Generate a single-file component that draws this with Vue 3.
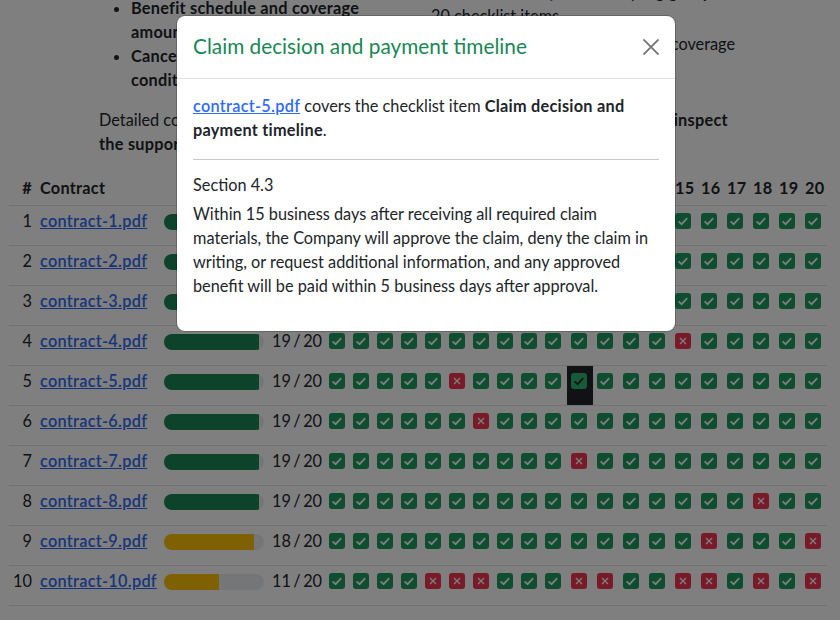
<script setup>
const heads = Array.from({ length: 20 }, (_, i) => i + 1)
const rows = [
  { n: 1, score: 20, miss: [] },
  { n: 2, score: 20, miss: [] },
  { n: 3, score: 20, miss: [] },
  { n: 4, score: 19, miss: [15] },
  { n: 5, score: 19, miss: [6] },
  { n: 6, score: 19, miss: [7] },
  { n: 7, score: 19, miss: [11] },
  { n: 8, score: 19, miss: [18] },
  { n: 9, score: 18, miss: [16, 20] },
  { n: 10, score: 11, miss: [5, 6, 7, 11, 12, 15, 16, 18, 20] }
]
</script>

<template>
  <div class="page">
    <div class="intro">
      <div class="cols">
        <ul class="left-list">
          <li><strong>Benefit schedule and coverage amounts</strong></li>
          <li><strong>Cancellation and renewal terms and conditions</strong></li>
        </ul>
        <div class="right-col">
          <div class="right-clip">Checked <a href="#">on the pack</a> for any <strong>big group</strong></div>
          <div class="right-top">20 checklist items</div>
          <div class="right-cov">Exclusions, waiting periods, and coverage</div>
        </div>
      </div>
      <p class="detail">Detailed contract results appear in the tables below, please select a check cell to <strong>inspect</strong><br /><strong>the supporting clause.</strong></p>
    </div>

    <table class="grid">
      <colgroup>
        <col class="c-num" />
        <col class="c-name" />
        <col class="c-bar" />
        <col class="c-score" />
        <col v-for="h in heads" :key="h" :class="h < 10 ? 'c-one' : 'c-two'" />
      </colgroup>
      <thead>
        <tr>
          <th class="num">#</th>
          <th>Contract</th>
          <th></th>
          <th></th>
          <th v-for="h in heads" :key="h">{{ h }}</th>
        </tr>
      </thead>
      <tbody>
        <tr v-for="r in rows" :key="r.n">
          <td class="num">{{ r.n }}</td>
          <td class="name"><a href="#">contract-{{ r.n }}.pdf</a></td>
          <td>
            <div class="track">
              <div class="fill" :class="{ warn: r.score < 19 }" :style="{ width: r.score * 5 + '%' }"></div>
            </div>
          </td>
          <td class="score">{{ r.score }} / 20</td>
          <td v-for="h in heads" :key="h" class="mark" :class="{ active: r.n === 5 && h === 11 }">
            <span class="box" :class="{ bad: r.miss.includes(h) }">
              <svg v-if="r.miss.includes(h)" viewBox="0 0 16 16" width="16" height="16">
                <path d="M5 5l6 6M11 5l-6 6" fill="none" stroke="#fff" stroke-width="1.3" />
              </svg>
              <svg v-else viewBox="0 0 16 16" width="16" height="16">
                <path d="M3.6 8.4l3 2.8 5.6-6" fill="none" stroke="currentColor" stroke-width="1.7" />
              </svg>
            </span>
          </td>
        </tr>
      </tbody>
    </table>

    <div class="backdrop"></div>
    <div class="modal">
      <header class="modal-head">
        <h2>Claim decision and payment timeline</h2>
        <svg class="close" viewBox="0 0 16 16" width="16" height="16">
          <path d="M0.5 0.5l15 15M15.5 0.5l-15 15" fill="none" stroke="#757575" stroke-width="1.9" />
        </svg>
      </header>
      <div class="modal-body">
        <p class="covers"><a href="#">contract-5.pdf</a> covers the checklist item <strong>Claim decision and payment timeline</strong>.</p>
        <hr />
        <div class="section">Section 4.3</div>
        <p class="clause">Within 15 business days after receiving all required claim materials, the Company will approve the claim, deny the claim in writing, or request additional information, and any approved benefit will be paid within 5 business days after approval.</p>
      </div>
    </div>
  </div>
</template>

<style>
html, body { margin: 0; background: #fff; overflow: hidden; }
</style>

<style scoped>
.page {
  position: relative;
  width: 840px;
  height: 620px;
  overflow: hidden;
  font-family: "Lato", "Noto Sans", sans-serif;
  font-size: 16.3px;
  line-height: 24px;
  color: #212529;
  padding: 0 0 0 9px;
  box-sizing: border-box;
}
strong, th { letter-spacing: 0.25px; font-weight: 700; }
a { color: #2f6bf5; letter-spacing: 0.28px; font-weight: 600; }
.intro { margin-top: -20px; padding-left: 90px; width: 650px; box-sizing: border-box; }
.cols { display: flex; }
.left-list { margin: 16px 0 0; padding: 0 30px 0 32px; width: 332px; flex: none; box-sizing: border-box; }
.right-col { flex: none; width: 304px; white-space: nowrap; }
.right-cov { margin-top: 4px; text-align: right; }
.detail { margin: 16px 0 0; white-space: nowrap; }
.grid {
  margin-top: 16px;
  border-collapse: separate;
  border-spacing: 0;
  table-layout: fixed;
  width: 818px;
}
.c-num { width: 27px; }
.c-name { width: 124px; }
.c-bar { width: 108px; }
.c-score { width: 57px; }
.c-one { width: 24px; }
.c-two { width: 26px; }
th, td {
  padding: 3px 4px 12px;
  vertical-align: top;
  border-bottom: 1px solid #dee2e6;
  white-space: nowrap;
  text-align: left;
}
th { padding: 4px 4px 5px; overflow: visible; }
th.num, td.num { text-align: right; }
.track { width: 100px; height: 16px; margin-top: 5px; background: #e9ecef; border-radius: 8px; overflow: hidden; }
.fill { height: 100%; background: #198754; }
.fill.warn { background: #ffc107; }
.score { word-spacing: -1.7px; overflow: visible; }
.mark { line-height: 0; color: #fff; }
.box {
  display: block;
  width: 16px;
  height: 16px;
  margin-top: 4px;
  background: #1f9a61;
  border-radius: 3px;
}
.box.bad { background: #f0354f; }
.box svg { display: block; }
.mark.active { background: #212529; color: #212529; }
.mark.active .box { background: #2bb673; }
.backdrop { position: absolute; inset: 0; background: rgba(0, 0, 0, 0.5); }
.modal {
  position: absolute;
  left: 177px;
  top: 16px;
  width: 498px;
  height: 315px;
  background: #fff;
  border-radius: 8px;
  box-shadow: 0 0 0 1px rgba(0, 0, 0, 0.2);
}
.modal-head {
  display: flex;
  align-items: center;
  justify-content: space-between;
  box-sizing: border-box;
  height: 63px;
  padding: 0 16px;
  border-bottom: 1px solid #dee2e6;
}
.modal-head h2 { margin: 0 0 2px; font-size: 20.8px; font-weight: 400; line-height: 30px; color: #198754; }
.close { flex: none; }
.modal-body { padding: 16px; }
.covers { margin: -1px 0 0; }
hr { border: 0; border-top: 1px solid #c8c8c8; margin: 17px 0 13px; }
.section { margin: 0; }
.clause { margin: 5px 0 0; }
</style>
